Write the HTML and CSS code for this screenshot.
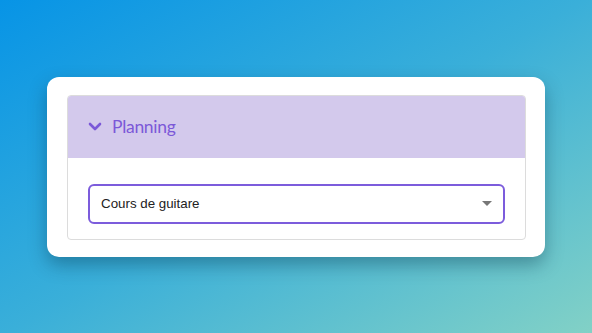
FILE: index.html
```html
<!DOCTYPE html>
<html lang="fr">
<head>
    <meta charset="UTF-8">
    <title>Planning</title>
    <link rel="stylesheet" href="styles.css">
</head>
<body>
    <div class="card">
        <div class="panel">
            <div class="panel-header">
                <svg class="chevron" width="14" height="10" viewBox="0 0 14 10">
                    <path d="M2 2 L7 7 L12 2" fill="none" stroke="#7b58d8" stroke-width="2.6" stroke-linecap="round" stroke-linejoin="round"/>
                </svg>
                <span class="panel-title">Planning</span>
            </div>
            <div class="panel-body">
                <div class="select-box">
                    <span class="select-value">Cours de guitare</span>
                    <span class="caret"></span>
                </div>
            </div>
        </div>
    </div>
</body>
</html>
```

FILE: styles.css
```css
* {
    margin: 0;
    padding: 0;
    box-sizing: border-box;
}
body {
    font-family: 'Liberation Sans', Arial, sans-serif;
    background: linear-gradient(150deg, #0794e6 0%, #3aafd9 50%, #82d1c6 100%);
    display: flex;
    justify-content: center;
    align-items: center;
    min-height: 100vh;
}
.card {
    background-color: white;
    border-radius: 12px;
    box-shadow: 0 8px 18px rgba(0, 40, 60, 0.35);
    width: 498px;
    padding: 18px 19px 17px 20px;
}
.panel {
    border: 1px solid #dcdcdc;
    border-radius: 4px;
    overflow: hidden;
}
.panel-header {
    background-color: #d3c9ec;
    height: 62px;
    display: flex;
    align-items: center;
    padding-left: 20px;
    gap: 10px;
}
.chevron {
    display: block;
}
.panel-title {
    font-family: Lato, 'Open Sans', sans-serif;
    font-size: 17.5px;
    letter-spacing: -0.3px;
    color: #7b58d8;
    margin-bottom: 1px;
}
.panel-body {
    padding: 26px 20px 15px;
}
.select-box {
    height: 40px;
    border: 2px solid #7c5cdc;
    border-radius: 6px;
    display: flex;
    align-items: center;
    justify-content: space-between;
    padding: 0 11px 0 11px;
}
.select-value {
    font-size: 13.333px;
    color: #222;
}
.caret {
    width: 0;
    height: 0;
    border-left: 5px solid transparent;
    border-right: 5px solid transparent;
    border-top: 5px solid #777;
}
```
